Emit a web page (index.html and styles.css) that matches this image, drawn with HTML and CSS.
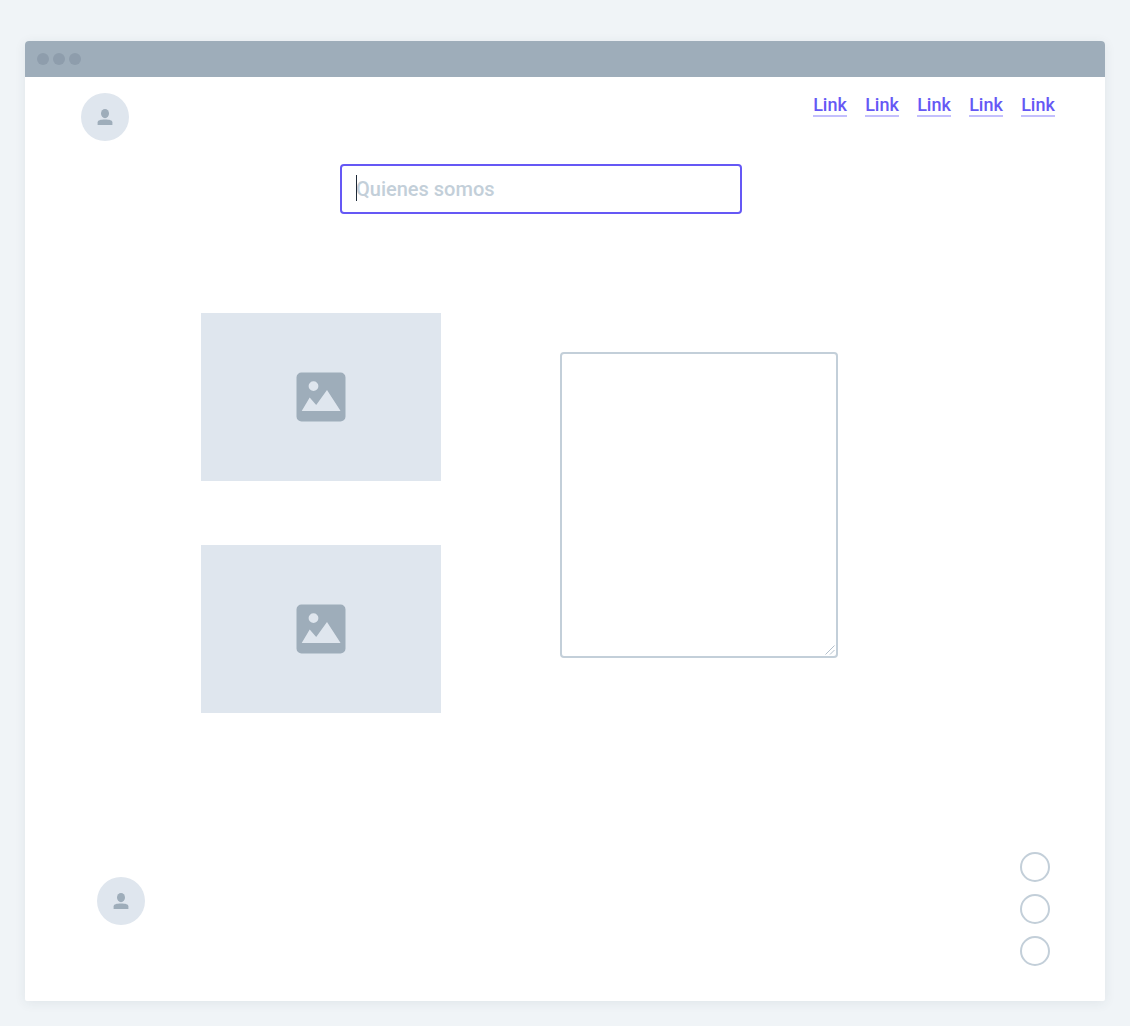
FILE: index.html
```html
<!DOCTYPE html>
<html lang="es">
<head>
<meta charset="utf-8">
<meta name="viewport" content="width=device-width, initial-scale=1">
<title>Quienes somos</title>
<link rel="stylesheet" href="styles.css">
</head>
<body>
<svg class="symbols" aria-hidden="true">
  <symbol id="person" viewBox="0 0 16 16">
    <ellipse cx="8" cy="4.6" rx="4" ry="4.6"/>
    <path d="M.6 16v-2.6C.6 11.2 3.5 10.4 8 10.4s7.4.8 7.4 3V16z"/>
  </symbol>
  <symbol id="picture" viewBox="0 0 50 50">
    <path fill-rule="evenodd" d="M5.500.5h39a5 5 0 0 1 5 5v39a5 5 0 0 1-5 5h-39a5 5 0 0 1-5-5v-39a5 5 0 0 1 5-5zM17.500 9.200a4.900 4.900 0 1 0 0 9.800a4.900 4.900 0 0 0 0-9.800zM5.700 39h38.900L31 18 20.200 33l-6.500-7.500z"/>
  </symbol>
</svg>
<div class="window">
  <div class="titlebar"><span class="dot"></span><span class="dot"></span><span class="dot"></span></div>
  <header class="header">
    <span class="avatar"><svg class="person"><use href="#person"/></svg></span>
    <nav class="nav">
      <a class="link" href="#">Link</a>
      <a class="link" href="#">Link</a>
      <a class="link" href="#">Link</a>
      <a class="link" href="#">Link</a>
      <a class="link" href="#">Link</a>
    </nav>
  </header>
  <main class="main">
    <div class="heading">
      <div class="field">
        <input class="input" type="text" placeholder="Quienes somos" aria-label="Quienes somos">
        <span class="caret"></span>
      </div>
    </div>
    <div class="content">
      <div class="gallery">
        <div class="image"><svg class="picture"><use href="#picture"/></svg></div>
        <div class="image"><svg class="picture"><use href="#picture"/></svg></div>
      </div>
      <div class="note">
        <textarea class="textarea" aria-label="Texto"></textarea>
        <svg class="grip" viewBox="0 0 10 10"><path d="M.5 9.500l9-9M5 9.500l4.500-4.500"/></svg>
      </div>
    </div>
  </main>
  <footer class="footer">
    <span class="avatar"><svg class="person"><use href="#person"/></svg></span>
    <div class="options" role="radiogroup" aria-label="Opciones">
      <input class="radio" type="radio" name="option" aria-label="Opción 1">
      <input class="radio" type="radio" name="option" aria-label="Opción 2">
      <input class="radio" type="radio" name="option" aria-label="Opción 3">
    </div>
  </footer>
</div>
</body>
</html>
```
FILE: styles.css
```css
* {
  box-sizing: border-box;
}

body {
  margin: 0;
  padding: 41px 25px 25px;
  background: #f0f4f7;
  font-family: Roboto, "Liberation Sans", sans-serif;
}

.symbols {
  display: none;
}

.window {
  border-radius: 4px 4px 2px 2px;
  background: #fff;
  box-shadow: 0 2px 12px rgba(40, 60, 80, 0.08);
}

.titlebar {
  display: flex;
  align-items: center;
  gap: 4px;
  height: 36px;
  padding: 0 12px;
  border-radius: 4px 4px 0 0;
  background: #9eadba;
}

.dot {
  width: 12px;
  height: 12px;
  border-radius: 50%;
  background: #8e9dac;
}

.header {
  display: flex;
  justify-content: space-between;
  align-items: flex-start;
  padding: 16px 50px 0 56px;
}

.avatar {
  display: flex;
  align-items: center;
  justify-content: center;
  width: 48px;
  height: 48px;
  border-radius: 50%;
  background: #dfe6ee;
}

.person {
  width: 16px;
  height: 16px;
  fill: #9eadba;
}

.nav {
  display: flex;
  gap: 18px;
}

.link {
  width: 34px;
  padding-top: 2px;
  border-bottom: 2px solid #c3bffd;
  color: #6558f5;
  font-size: 18px;
  font-weight: 500;
  line-height: 20px;
  text-align: center;
  text-decoration: none;
}

.heading {
  display: flex;
  justify-content: center;
  padding: 23px 48px 0 0;
}

.field {
  position: relative;
  width: 402px;
}

.input {
  display: block;
  width: 100%;
  height: 50px;
  padding: 0 14px;
  border: 2px solid #6558f5;
  border-radius: 4px;
  background: #fff;
  color: #2b3a4a;
  font: 500 20px/24px Roboto, "Liberation Sans", sans-serif;
  outline: none;
}

.input::placeholder {
  color: #c3cfd9;
  opacity: 1;
}

.caret {
  position: absolute;
  top: 11px;
  left: 16px;
  width: 1px;
  height: 26px;
  background: #1d2a38;
}

.content {
  display: flex;
  justify-content: center;
  align-items: center;
  gap: 119px;
  padding: 99px 91px 0 0;
}

.gallery {
  display: flex;
  flex-direction: column;
  gap: 64px;
}

.image {
  display: flex;
  align-items: center;
  justify-content: center;
  width: 240px;
  height: 168px;
  background: #dfe6ee;
}

.picture {
  width: 50px;
  height: 50px;
  fill: #9eadba;
}

.note {
  position: relative;
  padding-bottom: 16px;
}

.textarea {
  display: block;
  width: 278px;
  height: 306px;
  padding: 12px 14px;
  border: 2px solid #c3cfd9;
  border-radius: 4px;
  background: #fff;
  font: 500 20px/24px Roboto, "Liberation Sans", sans-serif;
  resize: none;
  outline: none;
}

.grip {
  position: absolute;
  right: 3px;
  bottom: 19px;
  width: 10px;
  height: 10px;
  fill: none;
  stroke: #b3c0cc;
}

.footer {
  display: flex;
  justify-content: space-between;
  align-items: flex-start;
  padding: 139px 55px 35px 72px;
}

.footer .avatar {
  margin-top: 25px;
}

.options {
  display: flex;
  flex-direction: column;
  gap: 12px;
}

.radio {
  appearance: none;
  width: 30px;
  height: 30px;
  margin: 0;
  border: 2px solid #c3cfd9;
  border-radius: 50%;
  background: #fff;
}

.radio:checked {
  border-color: #6558f5;
}
```
